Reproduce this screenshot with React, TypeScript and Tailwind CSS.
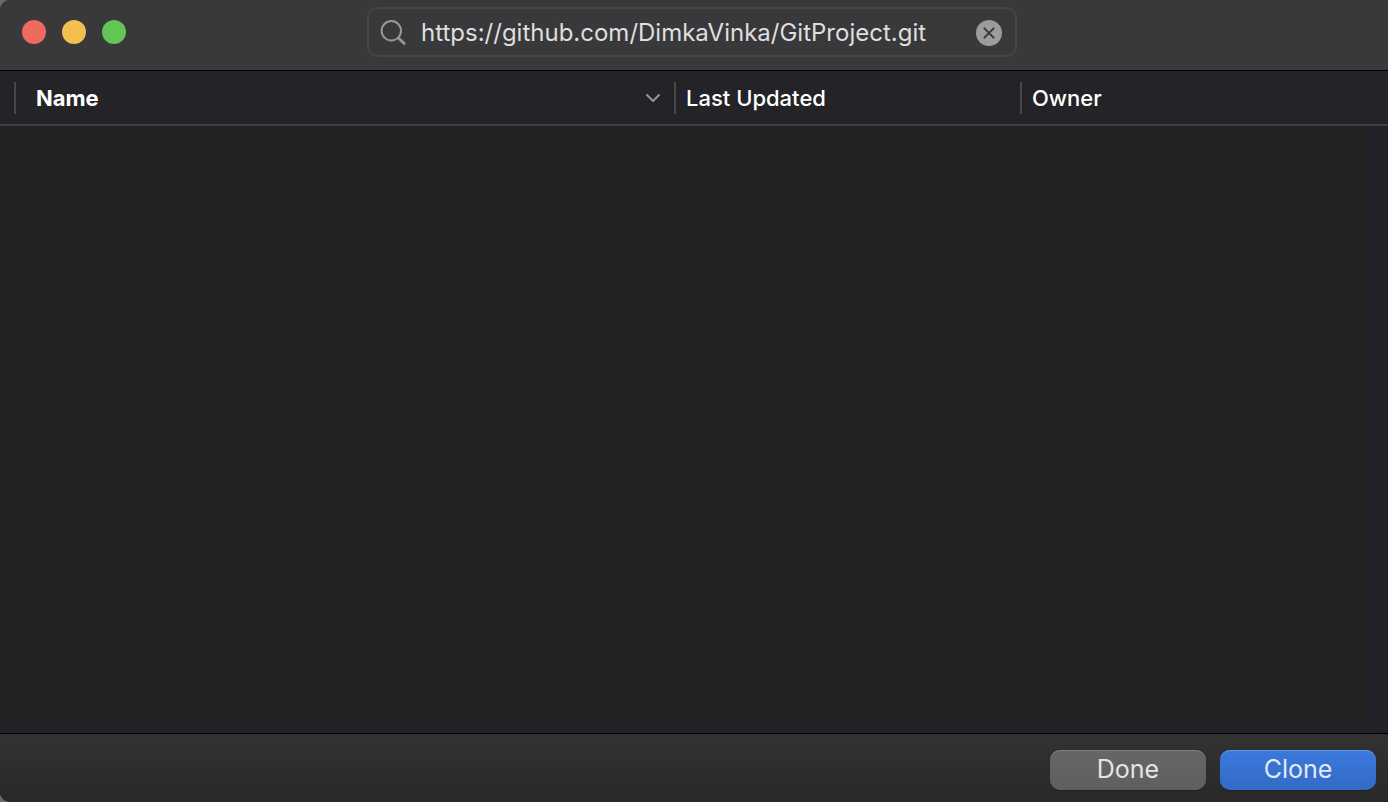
import { useState } from "react";

function SearchIcon() {
  return (
    <svg className="size-7 shrink-0" viewBox="0 0 28 28" fill="none" stroke="#98989a" aria-hidden="true">
      <circle cx="12.3" cy="12.8" r="9.7" strokeWidth="2" />
      <path d="M19.4 19.9l5.8 5.6" strokeWidth="2.8" strokeLinecap="round" />
    </svg>
  );
}

function ClearIcon() {
  return (
    <svg className="size-7" viewBox="0 0 28 28" aria-hidden="true">
      <circle cx="14" cy="15" r="13" fill="#9c9c9e" />
      <path d="M9.4 10.4l9.2 9.2M18.6 10.4l-9.2 9.2" stroke="#39393b" strokeWidth="2" strokeLinecap="round" />
    </svg>
  );
}

function SortIcon() {
  return (
    <svg className="h-2.5 w-4" viewBox="0 0 16 10" fill="none" aria-hidden="true">
      <path d="M2 2l6 6 6-6" stroke="#98989c" strokeWidth="1.9" strokeLinecap="round" strokeLinejoin="round" />
    </svg>
  );
}

export default function App() {
  const [query, setQuery] = useState("https://github.com/DimkaVinka/GitProject.git");

  return (
    <div className="bg-[#6a6a6a] font-['Inter','Liberation_Sans',sans-serif]">
      <main className="flex min-h-screen flex-col overflow-hidden rounded-l-[10px] bg-[#232323]">
        <header className="grid h-[71px] grid-cols-[1fr_650px_1fr] border-b border-black bg-[#39393b] pt-[7px]">
          <div className="flex h-[50px] items-center gap-4 pl-[22px]">
            <button type="button" aria-label="Close" className="size-6 rounded-full bg-[#ed6a5f]" />
            <button type="button" aria-label="Minimize" className="size-6 rounded-full bg-[#f5bf4f]" />
            <button type="button" aria-label="Zoom" className="size-6 rounded-full bg-[#62c655]" />
          </div>
          <div className="-ml-0.5 flex h-[50px] w-[650px] items-center rounded-[10px] border-2 border-[#464648] pr-3 pl-2.5">
            <SearchIcon />
            <input
              type="text"
              aria-label="Search repositories"
              value={query}
              onChange={(e) => setQuery(e.target.value)}
              className="ml-3.5 h-10 min-w-0 flex-1 bg-transparent text-2xl text-[#dfdfdf] outline-none"
            />
            <button type="button" aria-label="Clear search" onClick={() => setQuery("")}>
              <ClearIcon />
            </button>
          </div>
        </header>

        <section className="flex-1 shadow-[inset_5px_0_2px_#242229,inset_-18px_0_4px_#242229,inset_0_-9px_2px_#242229]">
          <table className="w-full table-fixed border-separate border-spacing-0 text-left text-[22px] leading-8 text-white">
            <thead>
              <tr className="bg-[#242328]">
                <th scope="col" aria-sort="descending" className="h-[55px] w-[676px] border-b-2 border-[#3e3d42] p-0 pl-3.5 font-bold">
                  <div className="flex h-8 items-center justify-between border-x-2 border-[#48474c] pr-[13px] pl-5">
                    Name
                    <SortIcon />
                  </div>
                </th>
                <th scope="col" className="w-[346px] border-b-2 border-[#3e3d42] p-0 font-medium">
                  <div className="h-8 border-r-2 border-[#48474c] pl-2.5">Last Updated</div>
                </th>
                <th scope="col" className="border-b-2 border-[#3e3d42] p-0 pl-2.5 font-medium">Owner</th>
              </tr>
            </thead>
            <tbody />
          </table>
        </section>

        <footer className="flex h-[69px] items-start justify-end gap-3.5 border-t border-black bg-linear-to-b from-[#323232] to-[#292929] pt-4 pr-3">
          <button
            type="button"
            className="h-10 w-[156px] rounded-[10px] bg-linear-to-b from-[#666666] to-[#5f5f5f] pb-0.5 text-[25px] leading-9 text-[#e4e4e4] shadow-[inset_0_1px_0_#7c7c7c,0_1px_1px_#222222]"
          >
            Done
          </button>
          <button
            type="button"
            className="h-10 w-[156px] rounded-[10px] bg-linear-to-b from-[#3b79dd] to-[#326bc5] pb-0.5 text-[25px] leading-9 text-[#e1e9f8] shadow-[inset_0_1px_0_#6596e4,0_1px_1px_#222222]"
          >
            Clone
          </button>
        </footer>
      </main>
    </div>
  );
}
